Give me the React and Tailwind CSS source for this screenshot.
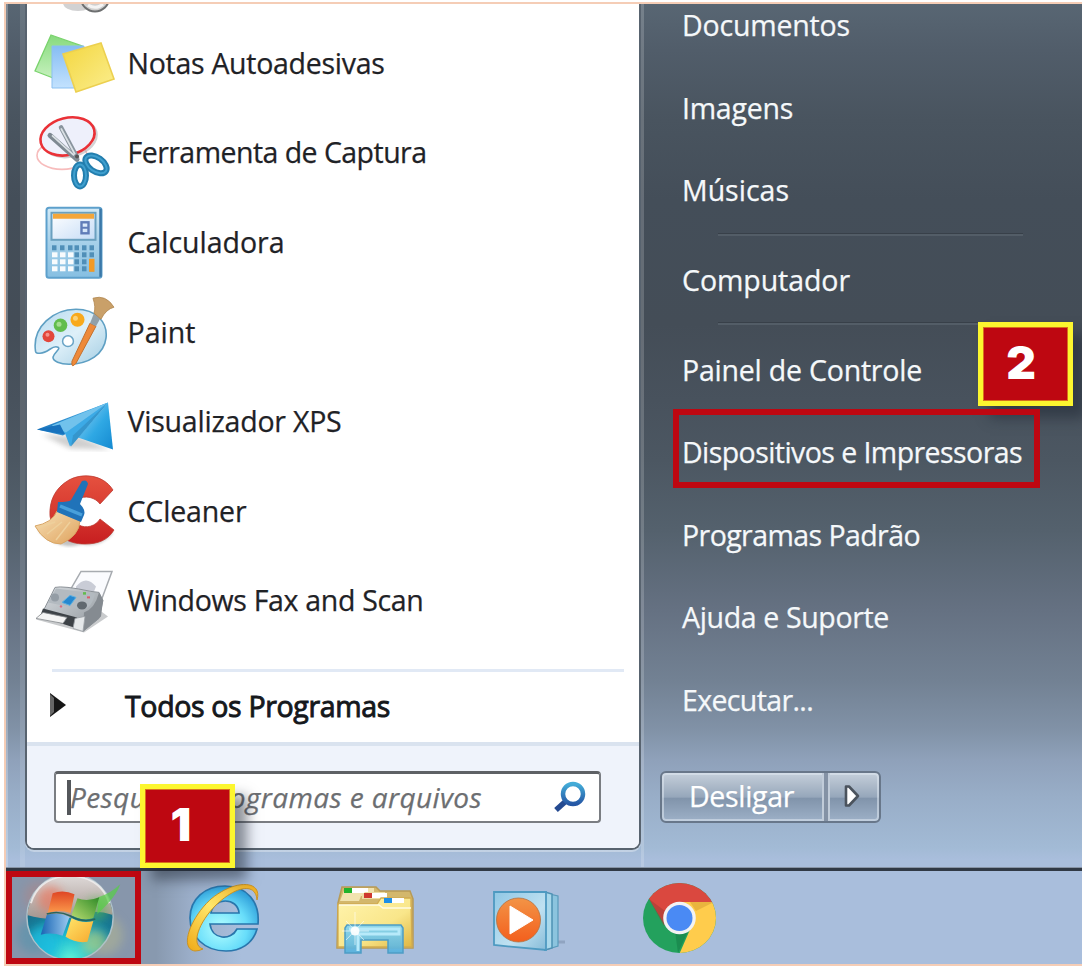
import React, { useLayoutEffect, useRef, useState } from "react";

/* Text whose tracking is tuned so that it fills the given width. */
function Label({ w, className = "[-webkit-text-stroke:0.25px_currentColor]", children }) {
  const ref = useRef(null);
  const [spacing, setSpacing] = useState(0);
  useLayoutEffect(() => {
    const el = ref.current;
    const natural = el.getBoundingClientRect().width;
    setSpacing((w - natural) / el.textContent.length);
  }, [w]);
  return (
    <span ref={ref} className={`inline-block whitespace-pre ${className}`} style={{ letterSpacing: `${spacing}px` }}>
      {children}
    </span>
  );
}

function NotesIcon() {
  return (
    <svg className="h-full w-full" viewBox="34 17 84 89.6">
      <defs>
        <linearGradient id="ny" x1="0" y1="0" x2="1" y2="1"><stop offset="0" stopColor="#f3d63f" /><stop offset="1" stopColor="#fbee8e" /></linearGradient>
        <linearGradient id="ng" x1="0" y1="0" x2="0" y2="1"><stop offset="0" stopColor="#86da7c" /><stop offset="1" stopColor="#cdf3c4" /></linearGradient>
        <linearGradient id="nb" x1="0" y1="0" x2="0" y2="1"><stop offset="0" stopColor="#86bdf3" /><stop offset="1" stopColor="#c3e2fe" /></linearGradient>
      </defs>
      <path d="M51 35L82 46L66 83L35 71Z" fill="url(#ng)" stroke="#7ad36d" strokeWidth="1.3" />
      <path d="M52 46H84V88H52Z" fill="url(#nb)" stroke="#8cc0f0" strokeWidth="1" />
      <path d="M63 54L101 43L114 79L76 92Z" fill="url(#ny)" stroke="#ecd050" strokeWidth="1.6" />
    </svg>
  );
}

function SnipIcon() {
  return (
    <svg className="h-full w-full" viewBox="34 106.6 84 89.6" fill="none">
      <ellipse cx="62" cy="155" rx="25" ry="14" stroke="#f7bcbc" strokeWidth="1.6" />
      <ellipse cx="70" cy="138" rx="27" ry="18" transform="rotate(-14 70 138)" stroke="#b5b5b9" strokeWidth="2.6" opacity=".6" />
      <ellipse cx="67.500" cy="136" rx="27.5" ry="18.5" transform="rotate(-14 67.500 136)" fill="#eef0fb" stroke="#ea3137" strokeWidth="2.6" />
      <path d="M50 135L77 159" stroke="#7e8992" strokeWidth="5" strokeLinecap="round" />
      <path d="M61 127L77 157" stroke="#8a959e" strokeWidth="4.5" strokeLinecap="round" />
      <path d="M52 135L74 155M61 128L75 154" stroke="#dbe1e5" strokeWidth="1.8" />
      <circle cx="77" cy="156" r="2" fill="#555" />
      <ellipse cx="80" cy="175" rx="6" ry="11" stroke="#237eae" strokeWidth="6" />
      <ellipse cx="96" cy="164" rx="7" ry="12" transform="rotate(-55 96 164)" stroke="#237eae" strokeWidth="6" />
      <ellipse cx="80" cy="175" rx="6" ry="11" stroke="#3f9fce" strokeWidth="2" />
      <ellipse cx="96" cy="164" rx="7" ry="12" transform="rotate(-55 96 164)" stroke="#3f9fce" strokeWidth="2" />
    </svg>
  );
}

function CalcIcon() {
  const cols = [52, 60, 68, 74.5, 82, 89.5];
  return (
    <svg className="h-full w-full" viewBox="34 196.2 84 89.6">
      <defs>
        <linearGradient id="cb" x1="0" y1="0" x2="0" y2="1"><stop offset="0" stopColor="#d3eaf7" /><stop offset=".5" stopColor="#a6d0e9" /><stop offset="1" stopColor="#86bfe2" /></linearGradient>
        <linearGradient id="cs" x1="0" y1="0" x2="1" y2="1"><stop offset="0" stopColor="#fff" /><stop offset="1" stopColor="#c5dcf6" /></linearGradient>
      </defs>
      <rect x="46.5" y="208" width="55" height="70" rx="2.5" fill="url(#cb)" stroke="#5da0cc" strokeWidth="2" />
      <path d="M100.5 209V277" stroke="#3b78a8" strokeWidth="2.5" />
      <rect x="51.5" y="213" width="44" height="27" fill="url(#cs)" stroke="#6aa0bf" strokeWidth="2" />
      <path d="M53 216.5H94" stroke="#f4a63a" strokeWidth="5" />
      <rect x="81.500" y="222.500" width="7" height="11" fill="none" stroke="#607cb8" strokeWidth="2.400" />
      <path d="M82 228H88" stroke="#607cb8" strokeWidth="2" />
      {[245.5, 252.5, 259.5, 266.500].map((y, r) =>
        cols.map((x, c) => (
          <rect key={`${r}-${c}`} x={x} y={y} width={r > 0 && c < 3 ? 5.5 : 4.500} height="5" fill={r === 0 || c > 2 ? "#508fb8" : "#f8fbfd"} />
        ))
      )}
      <rect x="89" y="259" width="5.5" height="13" fill="#f29a26" />
    </svg>
  );
}

function PaintIcon() {
  return (
    <svg className="h-full w-full" viewBox="34 285.8 84 89.6">
      <defs>
        <linearGradient id="pp" x1="0" y1="0" x2="1" y2="1"><stop offset="0" stopColor="#b5d9ee" /><stop offset=".5" stopColor="#def0f9" /><stop offset="1" stopColor="#a5cee3" /></linearGradient>
      </defs>
      <path d="M35.500 351C32 326 54 309 76 309C96 309 108 322 106 338C104 354 89 364 69 364C60 364 53 361 53 357C54 352 61 349 58 347C52 344 49 353 40 353C37 353 36 353 35.500 351Z" fill="url(#pp)" stroke="#5e9fc3" strokeWidth="1.6" />
      <circle cx="48.500" cy="336" r="6" fill="#e3473b" /><circle cx="47.500" cy="334.500" r="2" fill="#f5948a" />
      <circle cx="60.500" cy="325" r="6.800" fill="#62bd4d" /><circle cx="59" cy="324" r="2.500" fill="#a4dd90" />
      <circle cx="77.500" cy="319.500" r="7" fill="#f8a91c" /><circle cx="75.500" cy="318" r="2.500" fill="#fcd277" />
      <circle cx="68" cy="341" r="5.400" fill="#fff" stroke="#6aa4c6" strokeWidth="1.500" />
      <path d="M90 323L96 326L76 363Q71 369 72 361Z" fill="#ee8a3a" stroke="#c3702e" strokeWidth="1" />
      <path d="M90 323L94 313L101 317L96 326Z" fill="#91a0a9" />
      <path d="M94 313Q96 307 93 298Q106 294 114 307Q106 309 101 319Z" fill="#c9a069" stroke="#b0854e" strokeWidth=".8" />
    </svg>
  );
}

function XpsIcon() {
  return (
    <svg className="h-full w-full" viewBox="34 375.4 84 89.6">
      <defs>
        <linearGradient id="x1" x1="0" y1="0" x2="1" y2="1"><stop offset="0" stopColor="#9bd5f5" /><stop offset=".55" stopColor="#2fa8e4" /><stop offset="1" stopColor="#1489d0" /></linearGradient>
        <linearGradient id="x2" x1="0" y1="0" x2="1" y2="0"><stop offset="0" stopColor="#1b76bd" /><stop offset="1" stopColor="#54b5e8" /></linearGradient>
        <filter id="xs"><feGaussianBlur stdDeviation="2.5" /></filter>
      </defs>
      <path d="M42 435L70 449L110 450L80 437Z" fill="#777" opacity=".35" filter="url(#xs)" />
      <path d="M37 430L108 403L63 436Z" fill="url(#x2)" />
      <path d="M108 403L113 450L78 438Z" fill="url(#x1)" />
      <path d="M52 426L108 403L78 438L70 447L65 434Z" fill="#3caae6" />
      <path d="M52 426L108 403L66 433Z" fill="#71c2ec" />
      <path d="M108 403L71 447L73 436Z" fill="#3596cd" />
      <path d="M37 430L60 425L65 435Z" fill="#1772bd" />
    </svg>
  );
}

function CcleanerIcon() {
  return (
    <svg className="h-full w-full" viewBox="34 465 84 89.6">
      <defs>
        <linearGradient id="cc" x1="0" y1="0" x2="0" y2="1"><stop offset="0" stopColor="#e5513f" /><stop offset=".5" stopColor="#d83a30" /><stop offset="1" stopColor="#c71e20" /></linearGradient>
        <linearGradient id="br" x1="0" y1="0" x2="1" y2="1"><stop offset="0" stopColor="#f7e1b8" /><stop offset="1" stopColor="#dfa25c" /></linearGradient>
        <filter id="cf"><feGaussianBlur stdDeviation="1.5" /></filter>
      </defs>
      <path d="M38 530Q60 552 82 544Q100 548 113 533L108 528Z" fill="#777" opacity=".45" filter="url(#cf)" />
      <path d="M113 490C103 474 82 473 69 480C55 488 49 501 50 516C53 535 67 544 85 544C98 544 108 540 114 530L100 519C96 526 86 529 79 525C71 519 70 507 77 500C85 494 96 498 100 504Z" fill="url(#cc)" stroke="#bd3830" strokeWidth=".8" />
      <path d="M35 526Q52 523 57 511L80 521Q79 536 61 544Q45 544 35 526Z" fill="url(#br)" stroke="#d8a665" strokeWidth="1" />
      <path d="M40 527L55 522M47 534L62 522M56 540L70 522" stroke="#eed09c" strokeWidth="1.5" />
      <path d="M58 502Q69 502 71 500L82 481Q87 479 88 484L80 504Q86 510 84 515L81 522L57 512Z" fill="#2073b9" />
      <path d="M60 506L82 515" stroke="#48a0db" strokeWidth="3.500" />
    </svg>
  );
}

function FaxIcon() {
  return (
    <svg className="h-full w-full" viewBox="34 554.6 84 89.6">
      <defs>
        <linearGradient id="fx" x1="0" y1="0" x2="1" y2="1"><stop offset="0" stopColor="#d7dbdf" /><stop offset="1" stopColor="#8d949a" /></linearGradient>
      </defs>
      <path d="M36 619L84 632L108 616L100 610L44 610Z" fill="#c9cbcd" />
      <path d="M81 571H112L99 606L70 590Z" fill="#fafbfe" stroke="#a7abb0" strokeWidth="1.5" />
      <path d="M76 586Q86 574 96 586L94 591L76 590Z" fill="#c9ccd6" />
      <path d="M55 587Q63 585 91 591L99 592L103 600L99 618L83 631L72 622L44 609Z" fill="url(#fx)" stroke="#8b9197" strokeWidth="1" />
      <path d="M99 592L103 600L101 616L83 631L84 612Q95 608 99 592Z" fill="#858b91" />
      <path d="M56 588L95 593Q92 608 82 609L48 602Z" fill="#b3bac0" />
      <path d="M62 602L70 595L76 597L70 605Z" fill="#2688d0" stroke="#5bb0e0" />
      <ellipse cx="82" cy="605" rx="5" ry="4" fill="#616970" />
      <circle cx="55" cy="597" r="4" fill="#949da5" /><circle cx="61" cy="606" r="1.200" fill="#d96c80" />
      <path d="M83 593H86" stroke="#62bc4c" strokeWidth="2.500" /><path d="M87 597H90" stroke="#dd5b6b" strokeWidth="2" />
      <path d="M43 608L77 617L74 627L40 616Z" fill="#3d4247" />
      <path d="M43 612L67 617L63 623L36 618Z" fill="#f4f4f4" stroke="#85898d" strokeWidth=".8" />
      <path d="M75 618L85 616L83 631L73 628Z" fill="#e5e8ea" stroke="#9ba0a4" strokeWidth=".8" />
    </svg>
  );
}

function StartOrb() {
  return (
    <svg className="h-[82px] w-[124px]" viewBox="11 877 124 82">
      <defs>
        <radialGradient id="ob" cx=".5" cy="1" r=".9"><stop offset="0" stopColor="#62f3d6" /><stop offset=".3" stopColor="#20bed3" /><stop offset=".65" stopColor="#187b97" /><stop offset="1" stopColor="#1b5f7c" /></radialGradient>
        <linearGradient id="og" x1="0" y1="0" x2="0" y2="1"><stop offset="0" stopColor="#ded9d8" /><stop offset="1" stopColor="#a49690" /></linearGradient>
        <linearGradient id="wr" x1="0" y1="0" x2="0" y2="1"><stop offset="0" stopColor="#df4524" /><stop offset="1" stopColor="#fb9a4b" /></linearGradient>
        <linearGradient id="wg" x1="0" y1="1" x2="1" y2="0"><stop offset="0" stopColor="#b8dc71" /><stop offset="1" stopColor="#2e8a27" /></linearGradient>
        <linearGradient id="wb" x1="0" y1="0" x2="1" y2="0"><stop offset="0" stopColor="#1865b4" /><stop offset="1" stopColor="#9ccaf0" /></linearGradient>
        <linearGradient id="wy" x1="0" y1="0" x2="1" y2="1"><stop offset="0" stopColor="#ffe66b" /><stop offset="1" stopColor="#f7a92e" /></linearGradient>
        <filter id="gl" x="-50%" y="-50%" width="200%" height="200%"><feGaussianBlur stdDeviation="5" /></filter>
        <clipPath id="oc"><circle cx="69.500" cy="917" r="43" /></clipPath>
      </defs>
      <circle cx="38" cy="896" r="15" fill="#c47e73" opacity=".35" filter="url(#gl)" />
      <circle cx="34" cy="936" r="18" fill="#4a93ad" opacity=".5" filter="url(#gl)" />
      <circle cx="103" cy="935" r="20" fill="#b6b98f" opacity=".5" filter="url(#gl)" />
      <circle cx="69.500" cy="917" r="43.500" fill="url(#ob)" stroke="#aec2cb" strokeWidth="1.500" />
      <g clipPath="url(#oc)">
        <path d="M26 915C26 862 113 862 113 915Q90 907 69 918Q46 921 26 915Z" fill="url(#og)" />
        <circle cx="50" cy="899" r="13" fill="#f06e53" opacity=".6" filter="url(#gl)" />
        <circle cx="96" cy="909" r="12" fill="#57b755" opacity=".55" filter="url(#gl)" />
        <circle cx="94" cy="943" r="13" fill="#cbd474" opacity=".6" filter="url(#gl)" />
        <circle cx="42" cy="943" r="16" fill="#1cbfe2" opacity=".75" filter="url(#gl)" />
      </g>
      <path d="M30 903Q38 877 69 875Q101 877 109 903" fill="none" stroke="#f0efef" strokeWidth="2" opacity=".85" />
      <path d="M98 897Q111 893 120 884Q116 897 97 914Z" fill="#55cf46" opacity=".7" />
      <path d="M52 893Q63 889 74 894L70 913Q59 909 47 913Z" fill="url(#wr)" />
      <path d="M77 898Q87 902 99 897L93 918Q82 922 71 915Z" fill="url(#wg)" />
      <path d="M46 915Q57 911 69 917L62 936Q51 932 40 935Z" fill="url(#wb)" />
      <path d="M71 918Q82 924 93 921L87 942Q76 944 65 937Z" fill="url(#wy)" />
      <path d="M46 914Q58 910 70 916Q82 923 95 919" fill="none" stroke="#28665d" strokeWidth="1.600" />
    </svg>
  );
}

function IeIcon() {
  return (
    <svg className="h-[80px] w-[80px]" viewBox="182 876 80 80">
      <defs>
        <radialGradient id="ie" cx=".45" cy=".65" r=".7"><stop offset="0" stopColor="#b4ffff" /><stop offset=".55" stopColor="#68ddfa" /><stop offset="1" stopColor="#2493d4" /></radialGradient>
        <linearGradient id="ir" x1="0" y1="1" x2="1" y2="0"><stop offset="0" stopColor="#f0a916" /><stop offset=".5" stopColor="#ffe76b" /><stop offset="1" stopColor="#eda91b" /></linearGradient>
      </defs>
      <path fillRule="evenodd" d="M258 922H210C212 938 231 939 237 927H257C253 942 240 949 226 949C204 949 190 934 190 916C190 897 205 884 225 884C247 884 260 900 258 922ZM211 911H239C238 895 213 895 211 911Z" fill="url(#ie)" stroke="#2976ac" strokeWidth="1.700" />
      <path d="M257 898C263 878 235 877 211 897C190 916 179 947 195 949Q199 949 203 947C190 943 199 920 216 903C237 883 256 881 257 898Z" fill="url(#ir)" stroke="#c99325" strokeWidth="1" />
    </svg>
  );
}

function FolderIcon() {
  return (
    <svg className="h-[80px] w-[84px]" viewBox="332 878 84 80">
      <defs>
        <linearGradient id="ff" x1="0" y1="0" x2="1" y2="1"><stop offset="0" stopColor="#fff4ad" /><stop offset=".6" stopColor="#f9e68a" /><stop offset="1" stopColor="#dfb642" /></linearGradient>
        <linearGradient id="fb" x1="0" y1="0" x2="0" y2="1"><stop offset="0" stopColor="#88d6f0" /><stop offset="1" stopColor="#56b0dc" /></linearGradient>
      </defs>
      <path d="M338 903L342 887H376L380 891H410L413 899V948H337Z" fill="#d3b76c" stroke="#b89b55" strokeWidth="1.500" />
      <path d="M345 888H374V896H361L359 901H340Z" fill="#f1e3af" />
      <rect x="344" y="888" width="8" height="5" fill="#20b32b" /><rect x="352" y="888" width="16" height="5" fill="#fff" />
      <path d="M362 895L365 892H385V899H362Z" fill="#eddca2" />
      <rect x="364" y="893" width="8" height="5" fill="#cf392e" /><rect x="372" y="893" width="15" height="5" fill="#fff" />
      <path d="M338 904H377L381 898H411V904L412 947H338Z" fill="url(#ff)" stroke="#d1ac50" strokeWidth="1.300" />
      <path d="M339 905H379L383 908H411" stroke="#fffbe3" strokeWidth="1.500" fill="none" />
      <rect x="384" y="898" width="8" height="5" fill="#1c8fe7" /><rect x="392" y="898" width="12" height="5" fill="#fff" />
      <path d="M347 925H401L403 928V953H388V940H361V953H345V928Z" fill="url(#fb)" fillOpacity=".93" stroke="#4e9dc5" strokeWidth="1.500" />
      <path d="M349 929H399V934H358V951" fill="none" stroke="#b7eafa" strokeWidth="3" />
      <path d="M355 912V945M342 931H369M346 921L364 940M364 921L346 940" stroke="#fff" strokeWidth="1" opacity=".6" />
      <circle cx="355" cy="931" r="4.500" fill="#fff" opacity=".9" />
    </svg>
  );
}

function MediaIcon() {
  return (
    <svg className="h-[72px] w-[76px]" viewBox="490 882 76 72">
      <defs><linearGradient id="mb" x1="0" y1="0" x2="1" y2="1"><stop offset="0" stopColor="#90c7e4" /><stop offset=".6" stopColor="#bfe1f1" /><stop offset="1" stopColor="#86bbd8" /></linearGradient>
        <linearGradient id="mo" x1="0" y1="0" x2="0" y2="1"><stop offset="0" stopColor="#f39446" /><stop offset="1" stopColor="#f35f1d" /></linearGradient></defs>
      <path d="M550 941H565" stroke="#798ba7" strokeWidth="3" opacity=".5" />
      <path d="M545 892L558 895V945L545 949Z" fill="#8cc4de" stroke="#5a9abb" strokeWidth="1.200" />
      <path d="M545 891L552 893V947L545 949Z" fill="#a9d8eb" stroke="#4e91b4" strokeWidth="1.500" />
      <path d="M494 891H546V949L494 944Z" fill="url(#mb)" stroke="#4e9ac1" strokeWidth="1.800" />
      <circle cx="518.500" cy="919" r="22" fill="url(#mo)" stroke="#b5703f" strokeWidth=".8" />
      <path d="M510 905L533 919L510 933Z" fill="#fff" stroke="#fff" strokeWidth="1" />
    </svg>
  );
}

function ChromeIcon() {
  return (
    <svg className="h-[72px] w-[76px]" viewBox="641 881 76 72">
      <defs><clipPath id="chc"><ellipse cx="679.500" cy="917" rx="36.500" ry="35" /></clipPath></defs>
      <g clipPath="url(#chc)">
        <rect x="640" y="880" width="80" height="75" fill="#23a15d" />
        <path d="M648 896L640 870H720V902H679.500L665 924Z" fill="#da483f" />
        <path d="M679 901H720V956H678L692 924Z" fill="#ffcc4c" />
        <path d="M690 901H714L696 910Z" fill="#d7a033" opacity=".55" />
        <path d="M649 898L664 925L665 910Z" fill="#9c3b33" opacity=".5" />
        <path d="M690 926L678 952L675 930Z" fill="#168048" opacity=".6" />
      </g>
      <circle cx="679.500" cy="917" r="16.300" fill="#f3f3f3" />
      <circle cx="679.500" cy="917" r="13" fill="#4a8af4" />
    </svg>
  );
}

const programs = [
  { name: "Notas Autoadesivas", w: 257, Icon: NotesIcon },
  { name: "Ferramenta de Captura", w: 299, Icon: SnipIcon },
  { name: "Calculadora", w: 157, Icon: CalcIcon },
  { name: "Paint", w: 68, Icon: PaintIcon },
  { name: "Visualizador XPS", w: 214, Icon: XpsIcon },
  { name: "CCleaner", w: 119, Icon: CcleanerIcon },
  { name: "Windows Fax and Scan", w: 296, Icon: FaxIcon },
];

function Link({ w, children }) {
  return (
    <div className="flex h-[82.500px] items-center pl-[41px] text-[28.500px] leading-[82px] text-[#f5f8fa]">
      <Label w={w}>{children}</Label>
    </div>
  );
}

function Separator() {
  return <div className="-my-px ml-[77px] mb-[3.300px] mt-px h-[3px] w-[305px] border-b-2 border-t border-b-[#535d67] border-t-[#384049]" />;
}

function Badge({ className, children }) {
  return (
    <div className={`absolute z-20 flex h-[84px] w-[95px] items-center justify-center border-[5px] border-[#fcf62f] bg-[#be0711] pb-[5px] font-['Inter',sans-serif] text-[46px] leading-none font-black text-white [box-shadow:inset_0_0_0_1px_#d8701c,12px_12px_12px_rgba(30,38,50,.5)] ${className}`}>
      {children}
    </div>
  );
}

export default function App() {
  return (
    <div className="relative h-[968px] w-[1082px] overflow-hidden bg-white py-[2px] pl-[4px] font-['Open_Sans',sans-serif]">
      <div className="flex h-[964px] flex-col border-y-2 border-l-2 border-[#f5cdb6]">
        <div className="flex h-[864px] shrink-0 bg-[linear-gradient(180deg,#586673_0px,#515d6a_46px,#49545f_116px,#444e59_196px,#444d57_320px,#48525d_396px,#4c5762_456px,#54616d_526px,#657182_606px,#728193_676px,#8192a7_726px,#8fa1ba_756px,#98adc7_791px,#a2bad5_843px,#a9bedc_856px,#a9bedc_864px)]">
          <div className="w-[19px] border-l-2 border-[#ffffff40] [box-shadow:inset_-5px_0_0_rgba(255,255,255,.11)]" />
          <main className="flex h-[846px] w-[616px] flex-col overflow-hidden rounded-b-[9px] border-x-2 border-b-2 border-[#58636f] bg-white [box-shadow:0_2px_0_#ffffff55]">
            <div className="h-[13px] shrink-0 pl-[23px]">
              <svg className="h-[13px] w-[64px]" viewBox="50 4 64 13">
                <ellipse cx="78" cy="3" rx="15" ry="8" fill="#d2d2d3" />
                <ellipse cx="95" cy="-2" rx="14" ry="13.500" fill="#cfcfcf" stroke="#6d6f70" strokeWidth="2" />
                <path d="M88 5Q96 10 103 4" stroke="#f4f4f4" strokeWidth="3" fill="none" />
              </svg>
            </div>
            {programs.map(({ name, w, Icon }) => (
              <div key={name} className="flex h-[89.600px] shrink-0 items-center pl-[7px]">
                <div className="h-[89.600px] w-[84px]"><Icon /></div>
                <div className="pl-[9.500px] pt-[2px] text-[28.500px] leading-[88px] text-[#1f2226]"><Label w={w}>{name}</Label></div>
              </div>
            ))}
            <div className="mx-[15px] ml-[25px] mt-[25px] h-[3px] shrink-0 bg-[#e1e9f5]" />
            <div className="flex h-[70px] shrink-0 items-center pl-[22px] text-[28.500px] text-[#15181c]">
              <svg className="mb-[4px] h-[26px] w-[18px]" viewBox="0 0 18 26"><path d="M1 1L17 13L1 25Z" fill="#151515" /><path d="M1 2V24L5 20V6Z" fill="#666" /></svg>
              <div className="pb-[2px] pl-[58px]"><Label w={265} className="[-webkit-text-stroke:0.9px_currentColor]">Todos os Programas</Label></div>
            </div>
            <footer className="flex-1 border-t-4 border-[#dae3ef] bg-[#eff3fb] pl-[27px] pt-[25px]">
              <div className="relative flex h-[52px] w-[547px] items-center rounded-[4px] border-2 border-t-[3px] border-[#7a7d82] border-t-[#5e6165] bg-white pl-[11px]">
                <span className="h-[35px] w-[4px] bg-[#54575b]" />
                <div className="-ml-px pb-[2px] text-[28px] leading-[44px] text-[#6c6e71] italic"><Label w={412}>Pesquisar programas e arquivos</Label></div>
                <svg className="absolute left-[497px] top-[7px] h-[34px] w-[34px]" viewBox="0 0 34 34" fill="none">
                  <defs><linearGradient id="mg" x1="0" y1="0" x2="0" y2="1"><stop offset="0" stopColor="#43acd8" /><stop offset="1" stopColor="#2557a5" /></linearGradient></defs>
                  <path d="M3 29L13 20" stroke="#244a91" strokeWidth="5.500" />
                  <circle cx="20" cy="13" r="10" stroke="url(#mg)" strokeWidth="4.500" />
                </svg>
              </div>
            </footer>
          </main>
          <aside className="w-[435px] [box-shadow:inset_3px_0_0_rgba(255,255,255,.18)]">
            <div className="-mt-[20px] h-[864px]">
              <Link w={168}>Documentos</Link>
              <Link w={111}>Imagens</Link>
              <Link w={107}>Músicas</Link>
              <Separator />
              <Link w={168}>Computador</Link>
              <Separator />
              <Link w={240}>Painel de Controle</Link>
              <Link w={340}>Dispositivos e Impressoras</Link>
              <Link w={238}>Programas Padrão</Link>
              <Link w={207}>Ajuda e Suporte</Link>
              <Link w={131}>Executar...</Link>
              <div className="ml-[19px] mt-[30.400px] flex h-[52px] w-[221px] rounded-[6px] border-2 border-[#68778a] bg-[linear-gradient(180deg,#c4cfdc_0%,#aebbca_25%,#96a7bb_50%,#8194ab_53%,#9db0c7_100%)] text-[28.500px] leading-[46px] text-white [box-shadow:inset_0_0_0_2px_rgba(222,231,241,.55)]">
                <div className="w-[162px] border-r-2 border-[#c1ccd9] pl-[27px]"><Label w={105}>Desligar</Label></div>
                <div className="w-[4px] bg-[#8492a5]" />
                <div className="flex flex-1 items-center border-l-2 border-[#c1ccd9] pb-[2px] pl-[13px]">
                  <svg className="h-[24px] w-[18px]" viewBox="0 0 18 24"><path d="M3 2.500H6L15 12L6 21.500H3Z" fill="#fff" stroke="#4b535d" strokeWidth="2.600" strokeLinejoin="round" /></svg>
                </div>
              </div>
            </div>
          </aside>
        </div>
        <nav className="flex h-[96px] shrink-0 flex-col">
          <div className="h-[3px] bg-[#303945] [box-shadow:0_-1px_0_#8794a6,0_2px_0_#a2acba]" />
          <div className="flex h-[93px] items-center bg-[linear-gradient(90deg,#8899af_0px,#8899af_150px,#9baec9_185px,#a9bedc_235px)]">
            <div className="relative z-10 flex h-[93px] w-[135px] items-center overflow-hidden border-[6px] border-[#be0711] bg-[#8796ab]"><StartOrb /></div>
            <div className="ml-[41px]"><IeIcon /></div>
            <div className="ml-[70px]"><FolderIcon /></div>
            <div className="ml-[74px] pt-[2px]"><MediaIcon /></div>
            <div className="ml-[75px]"><ChromeIcon /></div>
          </div>
        </nav>
      </div>
      <div className="absolute left-[673px] top-[409px] z-30 h-[79px] w-[367px] border-[6px] border-[#be0711]" />
      <Badge className="left-[140px] top-[784px] pr-[13px]">1</Badge>
      <Badge className="left-[978px] top-[322px] pr-[9px]">2</Badge>
    </div>
  );
}
